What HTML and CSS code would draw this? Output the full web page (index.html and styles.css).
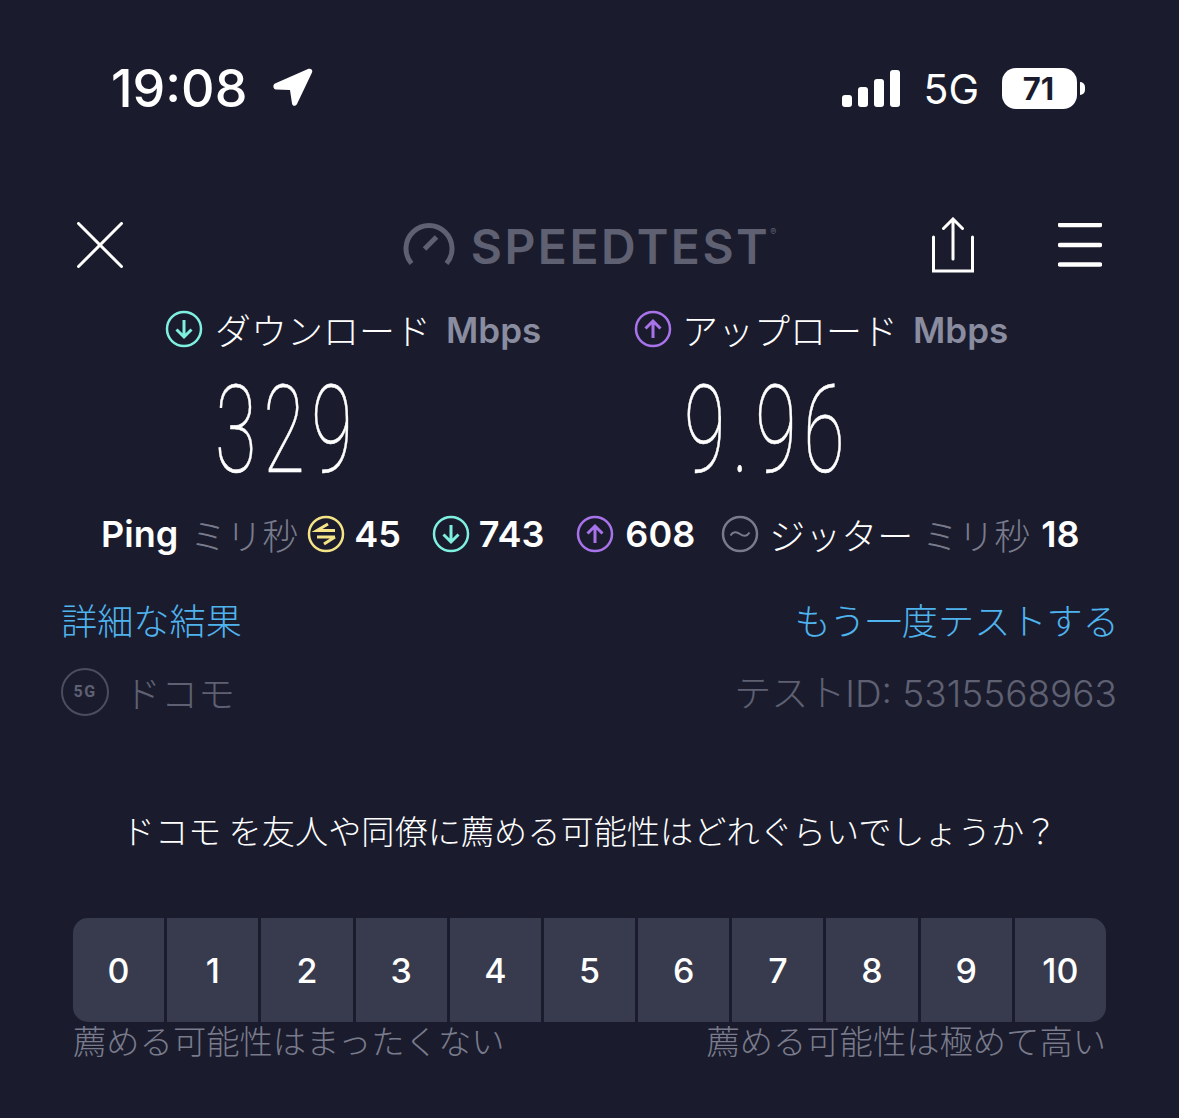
FILE: index.html
```html
<!DOCTYPE html>
<html lang="ja">
<head>
<meta charset="utf-8">
<title>Speedtest</title>
<link rel="stylesheet" href="styles.css">
</head>
<body>
<main class="screen">
  <header class="status">
    <div class="status-left">
      <span class="clock">19:08</span>
      <svg class="loc" viewBox="0 0 40 40"><path d="M2 15.500 35 1c3-1.200 5 .8 4 3.500L24 36c-1.200 2.500-4.500 2.500-5-.5L17 22 3 21.500c-3-.2-3.500-4.500-1-6z" fill="#fff"/></svg>
    </div>
    <div class="status-right">
      <svg class="signal" viewBox="0 0 58 37"><rect x="0" y="25" width="10" height="12" rx="3"/><rect x="16" y="17" width="10" height="20" rx="3"/><rect x="32" y="9" width="10" height="28" rx="3"/><rect x="48" y="0" width="10" height="37" rx="3"/></svg>
      <span class="net">5G</span>
      <span class="battery"><span class="battery-num">71</span></span>
    </div>
  </header>

  <nav class="nav">
    <svg class="ico-close" viewBox="0 0 46 46"><path d="M1.500 1.500 44.500 44.500M44.500 1.500 1.500 44.500" stroke="#fff" stroke-width="3" stroke-linecap="round"/></svg>
    <div class="brand">
      <svg class="gauge" viewBox="0 0 52 46"><path d="M8.500 41.500A23 23 0 1 1 43.500 41.500" fill="none" stroke="#5f6173" stroke-width="5"/><path d="M21.500 27 33.500 15" stroke="#5f6173" stroke-width="5" fill="none"/></svg>
      <span class="brand-name">SPEEDTEST</span><span class="brand-tm">®</span>
    </div>
    <div class="nav-right">
      <svg class="ico-share" viewBox="0 0 42 56"><path d="M21 42V3M11.500 11.500 21 2l9.500 9.500M1.500 20v34h39V20" fill="none" stroke="#fff" stroke-width="3" stroke-linecap="round"/></svg>
      <svg class="ico-menu" viewBox="0 0 44 44"><path d="M2 2h40M2 22h40M2 41.500h40" stroke="#fff" stroke-width="4.500" stroke-linecap="round"/></svg>
    </div>
  </nav>

  <section class="speeds">
    <div class="speed speed-down">
      <div class="speed-head">
        <svg class="ring" viewBox="0 0 38 38"><circle cx="19" cy="19" r="17" fill="none" stroke="#7ff0e0" stroke-width="2.500"/><path d="M19 10v17M11.500 19.500 19 27l7.500-7.500" fill="none" stroke="#7ff0e0" stroke-width="3"/></svg>
        <span class="speed-label">ダウンロード</span>
        <span class="speed-unit">Mbps</span>
      </div>
      <div class="speed-value">329</div>
    </div>
    <div class="speed speed-up">
      <div class="speed-head">
        <svg class="ring" viewBox="0 0 38 38"><circle cx="19" cy="19" r="17" fill="none" stroke="#a873ea" stroke-width="2.500"/><path d="M19 28V11M11.500 18.500 19 11l7.500 7.500" fill="none" stroke="#a873ea" stroke-width="3"/></svg>
        <span class="speed-label">アップロード</span>
        <span class="speed-unit">Mbps</span>
      </div>
      <div class="speed-value">9.96</div>
    </div>
  </section>

  <section class="stats">
    <span class="stat-strong">Ping</span>
    <span class="stat-dim">ミリ秒</span>
    <svg class="ring ring-ping" viewBox="0 0 38 38"><circle cx="19" cy="19" r="17" fill="none" stroke="#f5e487" stroke-width="2.500"/><path d="M21 9 10 15.500h18M28 22H10m18 0-11 7" fill="none" stroke="#f5e487" stroke-width="3"/></svg>
    <span class="stat-strong stat-45">45</span>
    <svg class="ring" viewBox="0 0 38 38"><circle cx="19" cy="19" r="17" fill="none" stroke="#7ff0e0" stroke-width="2.500"/><path d="M19 10v17M11.500 19.500 19 27l7.500-7.500" fill="none" stroke="#7ff0e0" stroke-width="3"/></svg>
    <span class="stat-strong stat-743">743</span>
    <svg class="ring" viewBox="0 0 38 38"><circle cx="19" cy="19" r="17" fill="none" stroke="#a873ea" stroke-width="2.500"/><path d="M19 28V11M11.500 18.500 19 11l7.500 7.500" fill="none" stroke="#a873ea" stroke-width="3"/></svg>
    <span class="stat-strong stat-608">608</span>
    <svg class="ring" viewBox="0 0 38 38"><circle cx="19" cy="19" r="17" fill="none" stroke="#797b8c" stroke-width="2.500"/><path d="M9.500 20.500c2.500-4 6-4 9.500-1.500s7 2.500 9.500-1.500" fill="none" stroke="#797b8c" stroke-width="2"/></svg>
    <span class="stat-jp">ジッター</span>
    <span class="stat-dim stat-dim-tight">ミリ秒</span>
    <span class="stat-strong stat-18">18</span>
  </section>

  <section class="links">
    <span class="link">詳細な結果</span>
    <span class="link">もう一度テストする</span>
  </section>

  <section class="meta">
    <div class="carrier">
      <span class="badge">5G</span>
      <span class="carrier-name">ドコモ</span>
    </div>
    <span class="test-id">テストID: 5315568963</span>
  </section>

  <p class="question">ドコモ を友人や同僚に薦める可能性はどれぐらいでしょうか？</p>

  <div class="scale">
    <span class="cell">0</span><span class="cell">1</span><span class="cell">2</span><span class="cell">3</span><span class="cell">4</span><span class="cell">5</span><span class="cell">6</span><span class="cell">7</span><span class="cell">8</span><span class="cell">9</span><span class="cell">10</span>
  </div>
  <div class="captions">
    <span>薦める可能性はまったくない</span>
    <span>薦める可能性は極めて高い</span>
  </div>
</main>
</body>
</html>
```

FILE: styles.css
```css
* { box-sizing: border-box; }
html, body { margin: 0; padding: 0; }
body { background: #1a1c2d; }
.screen {
  width: 1179px;
  height: 1118px;
  overflow: hidden;
  background: #1a1c2d;
  color: #fff;
  font-family: Inter, "Noto Sans CJK JP", sans-serif;
  display: flex;
  flex-direction: column;
}

/* status bar */
.status {
  display: flex;
  justify-content: space-between;
  align-items: center;
  height: 50px;
  margin-top: 63px;
  padding: 0 102px 0 111px;
}
.status-left { display: flex; align-items: center; gap: 26px; }
.clock { font: 500 52px/50px Inter, sans-serif; padding-top: 2px; }
.loc { width: 40px; height: 40px; }
.status-right { display: flex; align-items: center; }
.signal { width: 58px; height: 37px; fill: #fff; }
.net { font: 400 41px/50px Inter, sans-serif; margin-left: 23px; padding-top: 2px; }
.battery {
  position: relative;
  width: 75px;
  height: 41px;
  margin-left: 23px;
  background: #fff;
  border-radius: 14px;
  display: flex;
  align-items: center;
  justify-content: center;
}
.battery::after {
  content: "";
  position: absolute;
  right: -8px;
  top: 14px;
  width: 5px;
  height: 13px;
  background: #fff;
  border-radius: 0 6px 6px 0;
}
.battery-num { font: 700 31px/41px Inter, sans-serif; color: #1a1c2d; margin-right: 2px; }

/* nav */
.nav {
  display: grid;
  grid-template-columns: 1fr auto 1fr;
  align-items: center;
  height: 66px;
  margin-top: 99px;
  padding: 0 77px;
}
.ico-close { width: 46px; height: 46px; }
.brand { display: flex; align-items: center; }
.gauge { width: 52px; height: 46px; margin-right: 16px; }
.brand-name { font: 600 48px/60px Inter, sans-serif; color: #5f6173; letter-spacing: 2.500px; padding-top: 4px; }
.brand-tm { font: 400 9px/10px Inter, sans-serif; color: #5f6173; align-self: flex-start; margin-top: 14px; }
.nav-right { display: flex; align-items: center; justify-content: flex-end; gap: 84px; }
.ico-share { width: 42px; height: 56px; }
.ico-menu { width: 44px; height: 44px; }

/* speeds */
.speeds {
  display: grid;
  grid-template-columns: 469px 1fr;
  padding-left: 165px;
  margin-top: 32px;
}
.speed-head { display: flex; align-items: center; height: 38px; }
.ring { width: 38px; height: 38px; flex: none; }
.speed-label { font: 300 36px/38px "Noto Sans CJK JP", sans-serif; margin-left: 10px; }
.speed-down .speed-label { margin-left: 12px; }
.speed-unit { font: 600 35px/38px Inter, sans-serif; color: #8a8ca0; margin-left: 15px; padding-top: 2px; }
.speed-value {
  font: 100 123px/130px Roboto, sans-serif;
  letter-spacing: 11px;
  -webkit-text-stroke: .6px #fff;
  transform: scaleX(.615);
  transform-origin: left center;
  margin: 17px 0 0 50px;
  white-space: nowrap;
}

/* stats */
.stats {
  display: flex;
  align-items: center;
  height: 38px;
  margin-top: 20px;
  padding-left: 101px;
}
.stat-strong { font: 600 36px/38px Inter, sans-serif; }
.stat-dim { font: 300 36px/38px "Noto Sans CJK JP", sans-serif; color: #797b8c; margin-left: 12px; }
.stat-dim-tight { margin-left: 9px; }
.stat-jp { font: 300 36px/38px "Noto Sans CJK JP", sans-serif; margin-left: 10px; }
.ring-ping { margin-left: 9px; }
.stat-45 { margin: 0 31px 0 9px; }
.stat-743 { margin: 0 32px 0 9px; }
.stat-608 { margin: 0 26px 0 11px; }
.stat-18 { margin-left: 11px; }

/* links */
.links {
  display: flex;
  justify-content: space-between;
  margin-top: 45px;
  padding: 0 60px 0 61px;
}
.link { font: 300 36.200px/42px "Noto Sans CJK JP", sans-serif; color: #4fb3ee; }

/* meta */
.meta {
  display: flex;
  justify-content: space-between;
  align-items: center;
  margin-top: 28px;
  padding: 0 62px 0 61px;
}
.carrier { display: flex; align-items: center; }
.badge {
  width: 48px;
  height: 48px;
  border: 2px solid #4c4e60;
  border-radius: 50%;
  display: flex;
  align-items: center;
  justify-content: center;
  font: 700 16px/1 Roboto, sans-serif;
  letter-spacing: 1.500px;
  color: #5f6173;
}
.carrier-name { font: 300 37px/48px "Noto Sans CJK JP", sans-serif; color: #5f6173; margin-left: 15px; }
.test-id { font: 300 37px/44px Inter, "Noto Sans CJK JP", sans-serif; color: #5f6173; padding-top: 4px; }

/* question */
.question {
  margin: 92px 0 0;
  text-align: center;
  font: 300 33.200px/44px "Noto Sans CJK JP", sans-serif;
  color: #fff;
}

/* scale */
.scale {
  display: grid;
  grid-template-columns: repeat(11, 1fr);
  gap: 3px;
  height: 104px;
  margin: 66px 73px 0;
  border-radius: 15px;
  overflow: hidden;
}
.cell {
  display: flex;
  align-items: center;
  justify-content: center;
  background: #383b4d;
  font: 500 34px/1 Inter, sans-serif;
  padding-top: 2px;
}

/* captions */
.captions {
  display: flex;
  justify-content: space-between;
  margin: 0 73px;
  font: 300 33.300px/36px "Noto Sans CJK JP", sans-serif;
  color: #797b8c;
}
```
